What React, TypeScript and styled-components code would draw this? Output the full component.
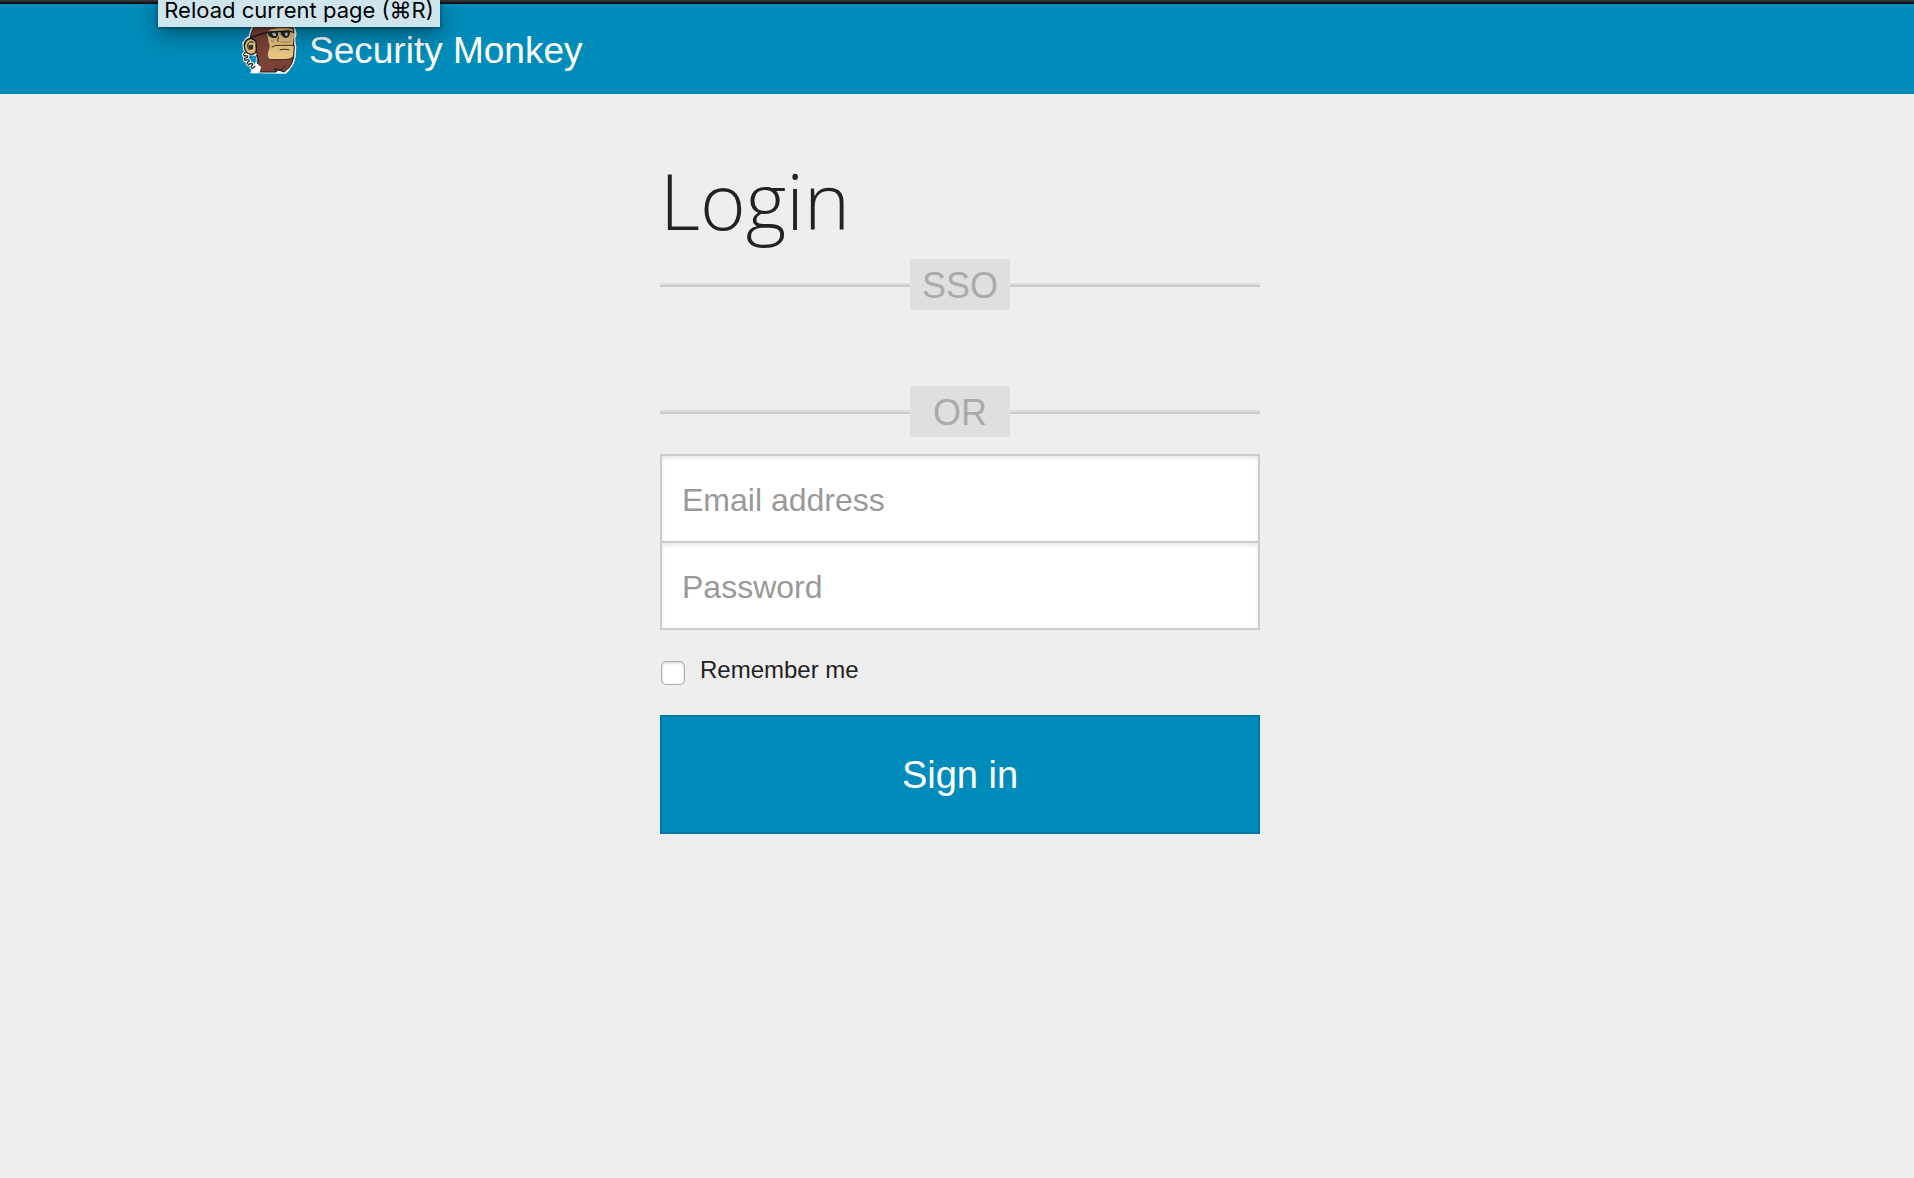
import React from "react";
import styled, { createGlobalStyle } from "styled-components";

const sans = `"Liberation Sans", Arial, Helvetica, sans-serif`;

const GlobalStyle = createGlobalStyle`
  *, *::before, *::after { box-sizing: border-box; }
  body {
    margin: 0;
    min-height: 100vh;
    background: #eeeeee;
    color: #222222;
    font-family: ${sans};
  }
`;

const Header = styled.header`
  border-top: 2px solid #333436;
  background: #008cba;
  box-shadow: inset 0 2px 0 #101418;
  padding: 13px 0 19px 6px;
`;

const Container = styled.div`
  max-width: 1440px;
  margin: 0 auto;
`;

const Brand = styled.a`
  display: inline-flex;
  align-items: flex-end;
  gap: 11px;
  color: #ffffff;
  font-size: 37px;
  line-height: 48px;
  text-decoration: none;
  vertical-align: top;
`;

const Logo = styled.svg`
  display: block;
  width: 58px;
  height: 60px;
`;

const Tooltip = styled.div`
  position: absolute;
  top: 0;
  left: 158px;
  width: 282px;
  height: 27px;
  background: #cfe5ee;
  box-shadow: 0 6px 24px rgba(0, 0, 0, 0.45), 0 1px 3px rgba(0, 0, 0, 0.4);
  color: #000000;
  font-family: Inter, "DejaVu Sans", sans-serif;
  font-size: 22px;
  line-height: 20px;
  text-align: center;
  white-space: nowrap;
`;

const Main = styled.main`
  padding: 50px 0 48px 6px;
`;

const Panel = styled.div`
  max-width: 600px;
  margin: 0 auto;
`;

const Title = styled.h1`
  margin: 0 0 3px;
  font-family: "Open Sans", sans-serif;
  font-size: 78px;
  font-weight: 300;
  line-height: 112px;
`;

const DividerRow = styled.div<{ $after: number }>`
  display: flex;
  align-items: center;
  margin-bottom: ${(p) => p.$after}px;

  &::before,
  &::after {
    content: "";
    flex: 1;
    height: 4px;
    background: #dddddd;
    border-bottom: 2px solid #cccccc;
  }
`;

const DividerLabel = styled.span`
  width: 100px;
  padding-top: 2px;
  background: #dfdfdf;
  color: #aaaaaa;
  font-size: 36px;
  line-height: 49px;
  text-align: center;
`;

const Field = styled.input`
  display: block;
  width: 100%;
  height: 89px;
  padding: 3px 20px 0;
  border: 2px solid #cccccc;
  border-radius: 0;
  background: #ffffff;
  box-shadow: inset 0 2px 4px rgba(0, 0, 0, 0.1);
  color: #222222;
  font-family: ${sans};
  font-size: 32px;

  & + & {
    margin-top: -2px;
  }

  &::placeholder {
    color: #999999;
    opacity: 1;
  }
`;

const Remember = styled.div`
  display: flex;
  align-items: center;
  gap: 15px;
  margin: 22px 0 27px;
  padding-left: 1px;
  font-size: 24px;
  line-height: 36px;
`;

const Checkbox = styled.input`
  appearance: none;
  width: 24px;
  height: 24px;
  margin: 6px 0 0;
  border: 1px solid #adadad;
  border-radius: 5px;
  background: #ffffff;
  box-shadow: inset 0 1px 3px rgba(0, 0, 0, 0.2);

  &:checked {
    background: #008cba;
  }
`;

const SignIn = styled.button`
  display: block;
  width: 100%;
  padding: 2px 0 0;
  border: 2px solid #0079a1;
  background: #008cba;
  color: #ffffff;
  font-family: ${sans};
  font-size: 38px;
  line-height: 113px;
  cursor: pointer;
`;

const MonkeyLogo = () => (
  <Logo viewBox="45 0 174 180" aria-hidden="true">
    {/* white sticker outline */}
    <path
      d="M78 173 L86 158 L94 140 L92 120 L64 118 L56 104 L54 84 L64 70 L73 64 L78 44 L92 24 L120 10 L160 12 L196 26 L209 40 L213 56 L209 72 L210 84 L212 98 L210 126 L204 146 L192 164 L182 174 Z"
      fill="#fff"
      stroke="#fff"
      strokeWidth="4"
      strokeLinejoin="round"
    />
    {/* fur */}
    <path
      d="M76 68 Q80 40 96 26 Q124 10 160 16 Q190 24 206 40 L206 128 Q202 150 188 162 L178 171 L160 165 L152 171 L98 171 Q106 150 96 116 Z"
      fill="#7b4238"
      stroke="#20191a"
      strokeWidth="3"
      strokeLinejoin="round"
    />
    {/* collar */}
    <path d="M80 173 L93 143 L108 156 L104 173 Z" fill="#fff" />
    <path d="M94 119 Q101 135 98 147" fill="none" stroke="#20191a" strokeWidth="3" />
    {/* face */}
    <path
      d="M128 64 Q122 46 142 42 Q170 36 202 42 Q211 52 206 68 L204 84 L207 96 L205 124 Q198 134 178 133 L134 133 Q126 126 130 108 Q138 94 131 82 Z"
      fill="#e8c683"
    />
    <path d="M205 84 L208 96 L206 124 Q198 135 178 134 L134 134" fill="none" stroke="#3a2920" strokeWidth="3" />
    {/* glasses */}
    <path d="M77 68 L124 52 L190 48 L208 52" fill="none" stroke="#17191c" strokeWidth="4" />
    <path d="M126 51 Q146 45 160 53 Q160 68 149 69 Q131 69 126 51Z" fill="#202329" />
    <path d="M166 52 Q182 46 195 52 Q194 67 184 69 Q170 68 166 52Z" fill="#202329" />
    <path d="M141 54 L151 53 L154 62 L145 63Z M179 53 L188 53 L188 62 L181 62Z" fill="#d5d9dc" />
    {/* nose and mouth */}
    <path
      d="M161 66 Q156 74 159 80 M141 96 Q149 89 166 91 L206 91 M165 104 Q178 101 192 104"
      fill="none"
      stroke="#392d24"
      strokeWidth="3"
      strokeLinecap="round"
    />
    <path d="M138 76 L148 82 M166 80 Q182 86 198 80" fill="none" stroke="#b28c58" strokeWidth="3" />
    {/* ear */}
    <path
      d="M93 80 Q82 65 67 74 Q55 82 59 99 Q61 116 78 118 Q91 118 94 106 Z"
      fill="#e3c180"
      stroke="#17191c"
      strokeWidth="4"
    />
    <path d="M86 82 Q72 76 68 90 L70 104" fill="none" stroke="#17191c" strokeWidth="3" />
    <path d="M70 91 L84 89 L84 102 L74 106Z" fill="#373537" />
    {/* earpiece cord */}
    <path
      d="M62 112 Q51 119 59 123 Q70 120 67 127 Q54 129 60 136 Q73 131 73 138 Q62 143 70 149 Q82 142 83 149 Q73 157 83 160 L91 153"
      fill="none"
      stroke="#ffffff"
      strokeWidth="10"
      strokeLinejoin="round"
    />
    <path
      d="M62 112 Q51 119 59 123 Q70 120 67 127 Q54 129 60 136 Q73 131 73 138 Q62 143 70 149 Q82 142 83 149 Q73 157 83 160 L91 153"
      fill="none"
      stroke="#24282b"
      strokeWidth="4"
    />
    {/* gap between cord and neck */}
    <path d="M76 125 L92 122 L96 141 L88 137 Z" fill="#1793bf" />
    {/* beard */}
    <path d="M151 170 L149 160 L162 166 Q177 162 181 151" fill="none" stroke="#20191a" strokeWidth="3" />
  </Logo>
);

const Divider = ({ label, after }: { label: string; after: number }) => (
  <DividerRow $after={after}>
    <DividerLabel>{label}</DividerLabel>
  </DividerRow>
);

export default function App() {
  return (
    <>
      <GlobalStyle />
      <Header>
        <Container>
          <Brand href="#">
            <MonkeyLogo />
            Security Monkey
          </Brand>
        </Container>
      </Header>
      <Tooltip role="tooltip">Reload current page (⌘R)</Tooltip>
      <Main>
        <Panel>
          <Title>Login</Title>
          <Divider label="SSO" after={76} />
          <Divider label="OR" after={17} />
          <form onSubmit={(e) => e.preventDefault()}>
            <Field type="email" placeholder="Email address" aria-label="Email address" />
            <Field type="password" placeholder="Password" aria-label="Password" />
            <Remember>
              <Checkbox type="checkbox" id="remember" />
              <label htmlFor="remember">Remember me</label>
            </Remember>
            <SignIn type="submit">Sign in</SignIn>
          </form>
        </Panel>
      </Main>
    </>
  );
}
